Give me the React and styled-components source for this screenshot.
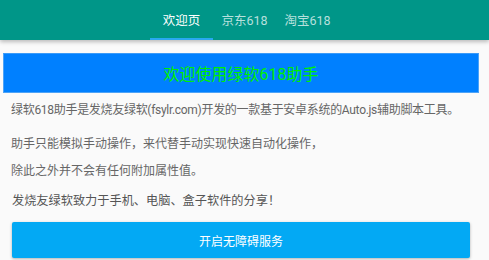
import React, { useState } from 'react';
import styled, { createGlobalStyle } from 'styled-components';

const GlobalStyle = createGlobalStyle`
  html, body {
    margin: 0;
    padding: 0;
    background: #fafafa;
    font-family: Roboto, "Noto Sans CJK SC", sans-serif;
  }
`;

const Page = styled.div`
  width: 489px;
  height: 260px;
  overflow: hidden;
  background: #fafafa;
`;

const Header = styled.header`
  height: 40px;
  background: #009688;
  display: flex;
  justify-content: center;
  box-shadow: 0 2px 4px rgba(0, 0, 0, 0.25);
  position: relative;
  z-index: 1;
`;

const Tab = styled.div`
  width: 63px;
  display: flex;
  align-items: center;
  justify-content: center;
  font-size: 12.5px;
  color: ${(p) => (p.$active ? '#ffffff' : 'rgba(255, 255, 255, 0.72)')};
  border-bottom: 2px solid ${(p) => (p.$active ? '#29a8f0' : 'transparent')};
  box-sizing: border-box;
  padding-top: 1px;
  cursor: pointer;
`;

const Content = styled.main`
  padding-top: 13px;
`;

const Banner = styled.div`
  margin: 0 10px 0 3px;
  height: 40px;
  box-sizing: border-box;
  background: #0080ff;
  border: 1px solid #4da3f7;
  border-top-color: #3a9af8;
  display: flex;
  align-items: center;
  justify-content: center;
  color: #00f000;
  font-size: 16px;
`;

const Para = styled.p`
  margin: ${(p) => p.$top}px 0 0;
  padding-left: 11px;
  font-size: 12px;
  line-height: 16px;
  color: #666666;
  letter-spacing: ${(p) => p.$spacing || 0}px;
`;

const Slogan = styled.p`
  margin: 14px 0 0;
  padding-left: 12px;
  font-size: 12.2px;
  line-height: 16px;
  color: #555555;
`;

const ActionButton = styled.button`
  display: block;
  margin: 13px 0 0 12px;
  width: 458px;
  height: 36px;
  border: none;
  border-radius: 2px;
  background: #03a9f4;
  color: #ffffff;
  font-family: inherit;
  font-size: 12px;
  box-shadow: 0 1px 3px rgba(0, 0, 0, 0.3);
  cursor: pointer;
`;

const tabs = ['欢迎页', '京东618', '淘宝618'];

export default function App() {
  const [active, setActive] = useState(0);

  return (
    <Page>
      <GlobalStyle />
      <Header>
        {tabs.map((t, i) => (
          <Tab key={t} $active={i === active} onClick={() => setActive(i)}>
            {t}
          </Tab>
        ))}
      </Header>
      <Content>
        <Banner>欢迎使用绿软618助手</Banner>
        <Para $top={9} $spacing={-0.3}>
          绿软618助手是发烧友绿软(fsylr.com)开发的一款基于安卓系统的Auto.js辅助脚本工具。
        </Para>
        <Para $top={18}>助手只能模拟手动操作，来代替手动实现快速自动化操作，</Para>
        <Para $top={11}>除此之外并不会有任何附加属性值。</Para>
        <Slogan>发烧友绿软致力于手机、电脑、盒子软件的分享！</Slogan>
        <ActionButton>开启无障碍服务</ActionButton>
      </Content>
    </Page>
  );
}
